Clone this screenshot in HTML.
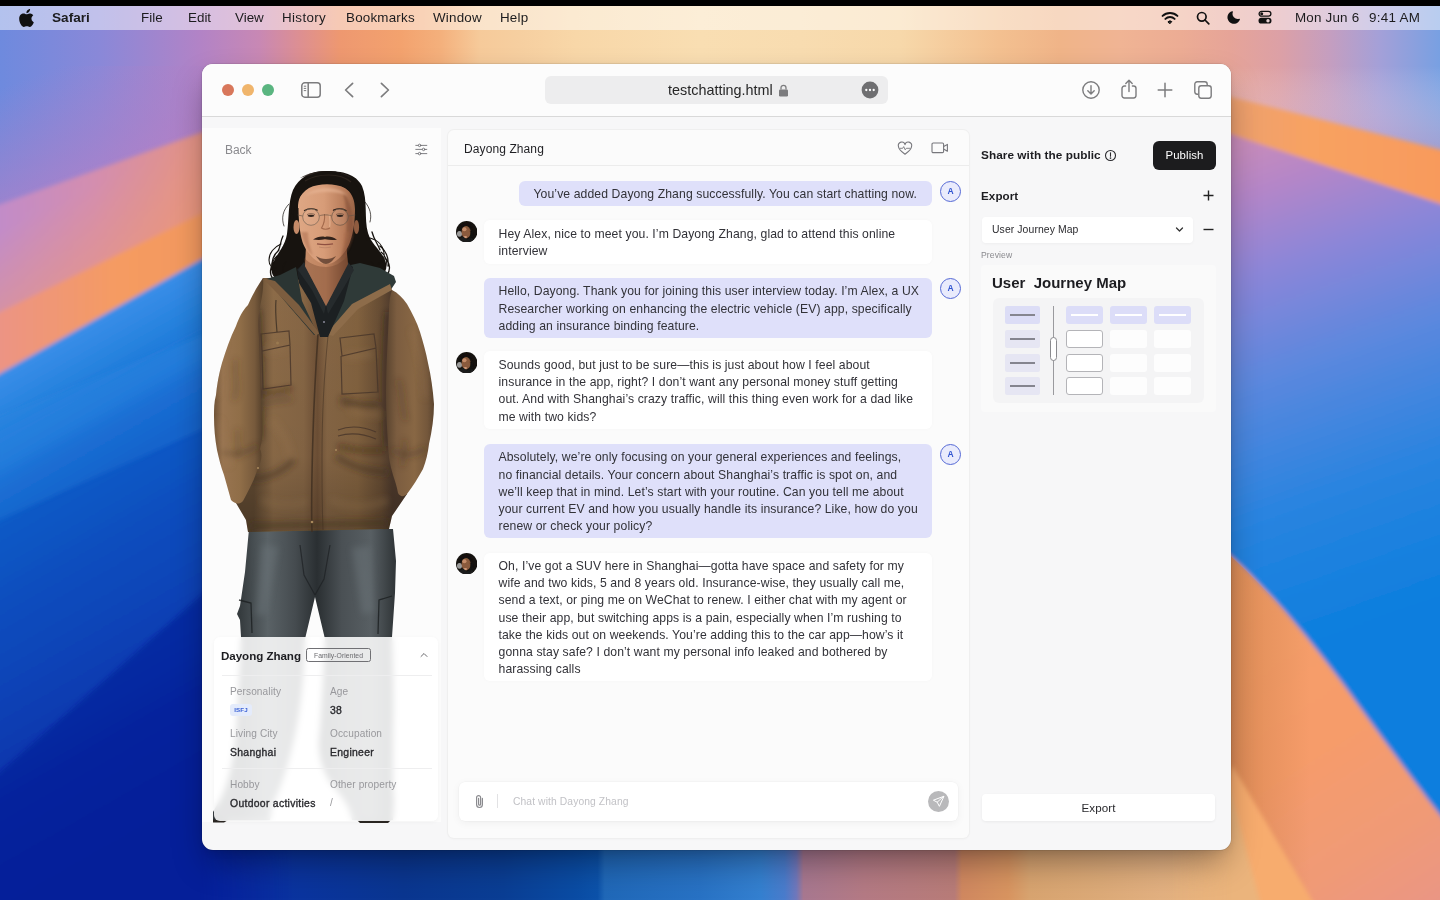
<!DOCTYPE html>
<html lang="en">
<head>
<meta charset="utf-8">
<title>testchatting.html</title>
<style>
*{box-sizing:border-box;margin:0;padding:0}
html,body{width:1440px;height:900px;overflow:hidden;background:#0a2aa0}
body{position:relative;font-family:"Liberation Sans",sans-serif;color:#333}
#wall{position:absolute;left:0;top:0;width:1440px;height:900px}
#notch{position:absolute;left:0;top:0;width:1440px;height:6px;background:#000}
#menubar{will-change:transform;position:absolute;left:0;top:6px;width:1440px;height:24px;background:rgba(255,255,255,.48)}
#menubar span{position:absolute;top:4px;font-size:13.4px;line-height:16px;color:#1c1c1e;white-space:nowrap}
#menubar svg{position:absolute}
#win{position:absolute;left:202px;top:64px;width:1029px;height:786px;border-radius:11px;background:#f7f7f8;overflow:hidden;box-shadow:0 0 0 .5px rgba(0,0,0,.14),0 16px 34px -6px rgba(0,0,10,.40),0 2px 8px rgba(0,0,10,.08)}
#tb{will-change:transform;position:absolute;left:0;top:0;width:1029px;height:53px;background:#fcfcfc;border-bottom:1px solid #d9d9d9}
#tb svg{position:absolute}
.tl{position:absolute;top:20px;width:12px;height:12px;border-radius:50%}
#url{position:absolute;left:343px;top:12px;width:343px;height:28px;border-radius:6px;background:#ededee}
#url span{position:absolute;left:123px;top:6px;font-size:14.4px;line-height:16px;color:#262626;white-space:nowrap}
#g{position:absolute;left:-202px;top:-64px;width:1440px;height:900px;will-change:transform}
#g *{position:absolute}
#g b,#g i,#g span.in{position:static}
.t{white-space:nowrap}
/* chat */
#chat{left:448px;top:130px;width:521px;height:708px;background:#fbfbfb;border-radius:6px;box-shadow:0 0 0 1px #efefef,0 1px 3px rgba(0,0,0,.04)}
#chath{left:0;top:0;width:521px;height:36px;border-bottom:1px solid #ececec}
.bub{border-radius:6px;font-size:12.2px;letter-spacing:.1px;line-height:17.15px;color:#323238;white-space:nowrap;padding:5.4px 0 0 14.5px}
.me{background:#dfe0fa}
.ot{background:#fff;box-shadow:0 0 4px rgba(0,0,0,.025)}
.ava{width:21px;height:21px;border-radius:50%;border:1px solid #5468d4;background:#e9ebfc;color:#2f54d0;font-size:8.5px;font-weight:700;line-height:19px;text-align:center}
.lab{font-size:10.1px;line-height:13px;color:#98989c;letter-spacing:.1px}
.val{font-size:10.4px;line-height:14px;color:#2a2a2e;font-weight:400;-webkit-text-stroke:.35px #2a2a2e;letter-spacing:.3px;margin-top:.6px}
</style>
</head>
<body>
<svg id="wall" width="1440" height="900" viewBox="0 0 1440 900">
<defs>
<linearGradient id="gTop" x1="0" y1="0" x2="1440" y2="0" gradientUnits="userSpaceOnUse">
<stop offset="0" stop-color="#6e8ade"/><stop offset=".07" stop-color="#8a88d8"/><stop offset=".139" stop-color="#b283c6"/><stop offset=".18" stop-color="#c888b4"/><stop offset=".208" stop-color="#dd8f92"/><stop offset=".236" stop-color="#ee9870"/><stop offset=".278" stop-color="#f3a26e"/><stop offset=".306" stop-color="#f4b07c"/><stop offset=".333" stop-color="#f6ca9a"/><stop offset=".361" stop-color="#f6cfa0"/><stop offset=".4" stop-color="#f8d7a8"/><stop offset=".486" stop-color="#f9deb2"/><stop offset=".556" stop-color="#f8dcb0"/><stop offset=".625" stop-color="#f7d8aa"/><stop offset=".694" stop-color="#f3c090"/><stop offset=".736" stop-color="#f0b488"/><stop offset=".778" stop-color="#f0b494"/><stop offset=".82" stop-color="#ecac94"/><stop offset=".854" stop-color="#e6a498"/><stop offset=".889" stop-color="#dca0a6"/><stop offset=".924" stop-color="#c49ec0"/><stop offset=".958" stop-color="#a4a0d8"/><stop offset="1" stop-color="#78a0e2"/>
</linearGradient>
<linearGradient id="gBot" x1="0" y1="0" x2="1440" y2="0" gradientUnits="userSpaceOnUse">
<stop offset="0" stop-color="#08179a"/><stop offset=".07" stop-color="#0a22a2"/><stop offset=".14" stop-color="#0a2ea6"/><stop offset=".21" stop-color="#0a349e"/><stop offset=".28" stop-color="#0a3690"/><stop offset=".35" stop-color="#0a3e94"/><stop offset=".4" stop-color="#0a4ca4"/><stop offset=".415" stop-color="#0c52aa"/><stop offset=".42" stop-color="#2068b8"/><stop offset=".486" stop-color="#2872c4"/><stop offset=".528" stop-color="#3480d0"/><stop offset=".545" stop-color="#4a7ccc"/><stop offset=".553" stop-color="#7078bc"/><stop offset=".558" stop-color="#a87890"/><stop offset=".6" stop-color="#b47a84"/><stop offset=".663" stop-color="#b87c78"/><stop offset=".668" stop-color="#d08860"/><stop offset=".7" stop-color="#d89460"/><stop offset=".715" stop-color="#d8a470"/><stop offset=".764" stop-color="#dcaa78"/><stop offset=".806" stop-color="#e2b080"/><stop offset=".86" stop-color="#eab47c"/><stop offset="1" stop-color="#eab47c"/>
</linearGradient>
<linearGradient id="gRdk" x1="1225" y1="0" x2="1310" y2="0" gradientUnits="userSpaceOnUse"><stop offset="0" stop-color="#d2844e" stop-opacity=".75"/><stop offset="1" stop-color="#d2844e" stop-opacity="0"/></linearGradient>
<linearGradient id="gPink" x1="0" y1="0" x2="215" y2="0" gradientUnits="userSpaceOnUse">
<stop offset="0" stop-color="#c28cc8"/><stop offset=".45" stop-color="#d48eae"/><stop offset="1" stop-color="#e6947e"/>
</linearGradient>
<linearGradient id="gPinkV" x1="0" y1="230" x2="48" y2="330" gradientUnits="userSpaceOnUse">
<stop offset="0" stop-color="#f09a70" stop-opacity="0"/><stop offset="1" stop-color="#f09a70" stop-opacity=".6"/>
</linearGradient>
<linearGradient id="gOr" x1="0" y1="0" x2="215" y2="0" gradientUnits="userSpaceOnUse">
<stop offset="0" stop-color="#ec9484"/><stop offset=".55" stop-color="#f59b62"/><stop offset="1" stop-color="#f2985e"/>
</linearGradient>
<linearGradient id="gBlueL" x1="0" y1="374" x2="232" y2="782" gradientUnits="userSpaceOnUse">
<stop offset="0" stop-color="#3a8ee8"/><stop offset=".09" stop-color="#2682de"/><stop offset=".185" stop-color="#166cd2"/><stop offset=".28" stop-color="#0e5ac6"/><stop offset=".425" stop-color="#0b4ebe"/><stop offset=".6" stop-color="#0a42b6"/><stop offset=".72" stop-color="#0a38ae"/><stop offset=".8" stop-color="#082aa4"/><stop offset="1" stop-color="#08209c"/>
</linearGradient>
<linearGradient id="gTLv" x1="60" y1="66" x2="110" y2="200" gradientUnits="userSpaceOnUse">
<stop offset="0" stop-color="#ac80c8" stop-opacity="0"/><stop offset=".55" stop-color="#ac80c8" stop-opacity=".5"/><stop offset="1" stop-color="#b480c6" stop-opacity=".85"/>
</linearGradient>
<linearGradient id="gRtop" x1="0" y1="66" x2="0" y2="150" gradientUnits="userSpaceOnUse">
<stop offset="0" stop-color="#fff" stop-opacity="0"/><stop offset="1" stop-color="#c89cc0" stop-opacity=".5"/>
</linearGradient>
<linearGradient id="gROr" x1="1225" y1="0" x2="1440" y2="0" gradientUnits="userSpaceOnUse">
<stop offset="0" stop-color="#eca070"/><stop offset=".4" stop-color="#f8a262"/><stop offset="1" stop-color="#f89a5c"/>
</linearGradient>
<linearGradient id="gRmid" x1="1250" y1="140" x2="1420" y2="620" gradientUnits="userSpaceOnUse">
<stop offset="0" stop-color="#c88cba"/><stop offset=".1" stop-color="#b486c8"/><stop offset=".25" stop-color="#8c86d8"/><stop offset=".45" stop-color="#5c88de"/><stop offset=".7" stop-color="#2a84e0"/><stop offset="1" stop-color="#0a7ede"/>
</linearGradient>
<linearGradient id="gRlow" x1="1225" y1="560" x2="1440" y2="900" gradientUnits="userSpaceOnUse">
<stop offset="0" stop-color="#f4a06a"/><stop offset=".5" stop-color="#f69c6a"/><stop offset=".8" stop-color="#f09a76"/><stop offset="1" stop-color="#ea9684"/>
</linearGradient>
<filter id="b2" x="-5%" y="-5%" width="110%" height="110%"><feGaussianBlur stdDeviation="2"/></filter>
<filter id="b6" x="-10%" y="-10%" width="120%" height="120%"><feGaussianBlur stdDeviation="6"/></filter>
<filter id="b14" x="-20%" y="-20%" width="140%" height="140%"><feGaussianBlur stdDeviation="14"/></filter>
<linearGradient id="gmB" x1="150" y1="0" x2="1250" y2="0" gradientUnits="userSpaceOnUse"><stop offset="0" stop-color="#fff" stop-opacity="0"/><stop offset=".045" stop-color="#fff" stop-opacity="0"/><stop offset=".13" stop-color="#fff" stop-opacity="1"/><stop offset=".93" stop-color="#fff" stop-opacity="1"/><stop offset=".985" stop-color="#fff" stop-opacity="0"/><stop offset="1" stop-color="#fff" stop-opacity="0"/></linearGradient>
<mask id="mB" maskUnits="userSpaceOnUse" x="150" y="840" width="1100" height="60"><rect x="150" y="840" width="1100" height="60" fill="url(#gmB)"/></mask>
<clipPath id="cRlow"><path d="M1215,542 C1270,590 1310,640 1340,680 C1380,735 1420,790 1450,828 L1450,910 L1215,910 Z"/></clipPath>
<clipPath id="cL"><rect x="0" y="0" width="216" height="900"/></clipPath>
<clipPath id="cR"><rect x="1222" y="0" width="218" height="900"/></clipPath>
</defs>
<rect width="1440" height="900" fill="#1a62c4"/>
<rect x="0" y="0" width="1440" height="72" fill="url(#gTop)"/>
<g>
<rect x="0" y="0" width="216" height="260" fill="url(#gTop)"/>
<rect x="0" y="66" width="216" height="194" fill="url(#gTLv)"/>
<g filter="url(#b2)">
<polygon points="-10,208 225,124 225,215 -10,320" fill="url(#gPink)"/>
<polygon points="-10,208 225,124 225,215 -10,320" fill="url(#gPinkV)"/>
<polygon points="-10,317 225,202 225,250 -10,380" fill="url(#gOr)"/>
<polygon points="-10,379 225,246 300,246 300,910 -10,910" fill="url(#gBlueL)"/>
</g>
<g filter="url(#b6)">
<polygon points="-10,440 225,320 225,350 -10,480" fill="#2a86e0" opacity=".35"/>
</g>
<g filter="url(#b2)"><polygon points="-20,790 230,570 320,570 320,920 -20,920" fill="#081c98" opacity=".6"/><polygon points="-10,420 -10,524 215,424 215,330" fill="#2a88e2" opacity=".25"/></g>
</g>
<g>
<rect x="1222" y="0" width="218" height="230" fill="url(#gTop)"/>
<rect x="1222" y="66" width="218" height="150" fill="url(#gRtop)"/>
<g filter="url(#b2)">
<polygon points="1215,125 1450,200 1450,910 1215,910" fill="url(#gRmid)"/>
<polygon points="1215,93 1450,152 1450,207 1215,129" fill="url(#gROr)"/>
<path d="M1215,542 C1270,590 1310,640 1340,680 C1380,735 1420,790 1450,828 L1450,910 L1215,910 Z" fill="url(#gRlow)"/>
</g>
<rect x="1215" y="540" width="100" height="370" fill="url(#gRdk)" clip-path="url(#cRlow)"/>
<g filter="url(#b2)"><polygon points="1232,765 1315,905 1255,905 1226,790" fill="#f7ac6e"/><polygon points="1100,786 1229,786 1261,905 1100,905" fill="#ebb47c"/></g>
</g>
<rect x="150" y="840" width="1100" height="60" fill="url(#gBot)" mask="url(#mB)"/>
</svg>

<div id="notch"></div>
<div id="menubar">
<svg style="left:19px;top:3px" width="15" height="18" viewBox="0 0 814 1000"><path fill="#111" d="M788 341c-6 5-108 62-108 190 0 148 130 200 134 201-1 3-21 72-69 142-43 62-88 124-156 124s-86-40-164-40c-77 0-104 41-166 41s-106-57-156-127C45 790 0 663 0 543c0-193 126-296 249-296 66 0 120 43 161 43 39 0 100-46 175-46 28 0 130 3 197 99zM554 159c31-37 53-88 53-139 0-7-1-14-2-20-50 2-110 34-146 76-28 32-55 83-55 135 0 8 1 16 2 18 3 1 8 2 13 2 45 0 102-30 135-72z"/></svg>
<span style="left:52px;font-weight:700;font-size:13.6px">Safari</span>
<span style="left:141px">File</span>
<span style="left:188px">Edit</span>
<span style="left:235px">View</span>
<span style="left:282px;letter-spacing:.35px">History</span>
<span style="left:346px;letter-spacing:.2px">Bookmarks</span>
<span style="left:433px;letter-spacing:.2px">Window</span>
<span style="left:500px;letter-spacing:.2px">Help</span>
<svg style="left:1161px;top:5px" width="18" height="14" viewBox="0 0 18 14" fill="none" stroke="#111" stroke-linecap="round"><path d="M1.6 4.9a10.6 10.6 0 0 1 14.8 0" stroke-width="2"/><path d="M4.4 7.9a6.6 6.6 0 0 1 9.2 0" stroke-width="2"/><path d="M7.2 10.6a2.6 2.6 0 0 1 3.6 0L9 12.6z" fill="#111" stroke-width="1"/></svg>
<svg style="left:1196px;top:5px" width="14" height="14" viewBox="0 0 14 14" fill="none" stroke="#111" stroke-width="1.7" stroke-linecap="round"><circle cx="5.8" cy="5.8" r="4.3"/><path d="M9 9l3.8 3.8"/></svg>
<svg style="left:1226px;top:4px" width="15" height="15" viewBox="0 0 15 15"><path fill="#111" d="M6.2 1.2a6.4 6.4 0 1 0 7.7 8.3c.2-.5-.3-.9-.8-.7A5.2 5.2 0 0 1 6.9 1.9c.2-.5-.2-.9-.7-.7z"/></svg>
<svg style="left:1258px;top:4px" width="14" height="14" viewBox="0 0 14 14"><rect x="1.1" y="1.4" width="11.8" height="4.8" rx="2.4" fill="none" stroke="#111" stroke-width="1.3"/><circle cx="3.7" cy="3.8" r="1.5" fill="#111"/><rect x=".5" y="7.8" width="13" height="5.8" rx="2.9" fill="#111"/><circle cx="10" cy="10.7" r="1.7" fill="#e6cfd0"/></svg>
<span style="left:1295px;letter-spacing:.2px">Mon Jun 6</span>
<span style="left:1369px;letter-spacing:.3px">9:41 AM</span>
</div>
<div id="win">
<div id="tb">
<div class="tl" style="left:20px;background:#d8775b"></div>
<div class="tl" style="left:40px;background:#f0b56c"></div>
<div class="tl" style="left:60px;background:#5ab580"></div>
<svg style="left:98px;top:17px" width="22" height="18" viewBox="0 0 22 18" fill="none" stroke="#7c7c7e" stroke-width="1.5"><rect x="1.8" y="1.8" width="18.4" height="14.4" rx="3"/><path d="M8.2 1.8v14.4"/><path d="M3.8 5.2h2.4M3.8 7.4h2.4M3.8 9.6h2.4" stroke-width="1"/></svg>
<svg style="left:141px;top:18px" width="12" height="16" viewBox="0 0 12 16" fill="none" stroke="#7c7c7e" stroke-width="1.7" stroke-linecap="round" stroke-linejoin="round"><path d="M9.6 1.4L2.6 8l7 6.6"/></svg>
<svg style="left:177px;top:18px" width="12" height="16" viewBox="0 0 12 16" fill="none" stroke="#7c7c7e" stroke-width="1.7" stroke-linecap="round" stroke-linejoin="round"><path d="M2.4 1.4L9.4 8l-7 6.6"/></svg>
<div id="url"><span>testchatting.html</span>
<svg style="left:233px;top:8px" width="11" height="13" viewBox="0 0 11 13"><rect x="1" y="5.4" width="9" height="7" rx="1.2" fill="#7c7c7e"/><path d="M3 5.6V3.8a2.5 2.5 0 0 1 5 0v1.8" fill="none" stroke="#7c7c7e" stroke-width="1.3"/></svg>
<svg style="left:316px;top:5px" width="18" height="18" viewBox="0 0 18 18"><circle cx="9" cy="9" r="8.4" fill="#6f6f71"/><circle cx="5.3" cy="9" r="1.15" fill="#fff"/><circle cx="9" cy="9" r="1.15" fill="#fff"/><circle cx="12.7" cy="9" r="1.15" fill="#fff"/></svg>
</div>
<svg style="left:879px;top:16px" width="20" height="20" viewBox="0 0 20 20" fill="none" stroke="#7c7c7e" stroke-width="1.4" stroke-linecap="round" stroke-linejoin="round"><circle cx="10" cy="10" r="8.2"/><path d="M10 5.6v8.2M6.8 10.8L10 14l3.2-3.2"/></svg>
<svg style="left:918px;top:14px" width="18" height="22" viewBox="0 0 18 22" fill="none" stroke="#7c7c7e" stroke-width="1.4" stroke-linecap="round" stroke-linejoin="round"><path d="M5.6 8H4.4A2.4 2.4 0 0 0 2 10.4v7.2A2.4 2.4 0 0 0 4.4 20h9.2a2.4 2.4 0 0 0 2.4-2.4v-7.2A2.4 2.4 0 0 0 13.6 8h-1.2"/><path d="M9 13.5V2.4M5.8 5.4L9 2.2l3.2 3.2"/></svg>
<svg style="left:955px;top:18px" width="16" height="16" viewBox="0 0 16 16" fill="none" stroke="#7c7c7e" stroke-width="1.5" stroke-linecap="round"><path d="M8 1.2v13.6M1.2 8h13.6"/></svg>
<svg style="left:991px;top:16px" width="20" height="20" viewBox="0 0 20 20" fill="none" stroke="#7c7c7e" stroke-width="1.4" stroke-linejoin="round"><path d="M5.3 14.2H4.2A2.4 2.4 0 0 1 1.8 11.8V4.2A2.4 2.4 0 0 1 4.2 1.8h7.6a2.4 2.4 0 0 1 2.4 2.4v1.1"/><rect x="5.8" y="5.8" width="12.4" height="12.4" rx="2.4"/></svg>
</div>
<div id="g">
<div style="left:202px;top:128px;width:238.5px;height:694px;background:#fcfcfc"></div>
<div class="t" style="left:225px;top:142px;font-size:12px;line-height:16px;color:#8a8a8e;letter-spacing:-.1px">Back</div>
<svg style="left:414px;top:143px" width="14" height="13" viewBox="0 0 14 13" fill="none" stroke="#707075" stroke-width=".9" stroke-linecap="round"><path d="M1.8 2.4h2.4M7 2.4h5.8M1.8 6.4h6.4M11 6.4h1.8M1.8 10.6h2.4M7 10.6h5.8"/><circle cx="5.6" cy="2.4" r="1.25"/><circle cx="9.6" cy="6.4" r="1.25"/><circle cx="5.6" cy="10.6" r="1.25"/></svg>
<svg style="left:205px;top:165px" width="240" height="662" viewBox="205 165 240 662">
<defs>
<linearGradient id="pSkin" x1="296" y1="0" x2="358" y2="0" gradientUnits="userSpaceOnUse"><stop offset="0" stop-color="#dfa885"/><stop offset=".45" stop-color="#d79c78"/><stop offset=".8" stop-color="#b67a58"/><stop offset="1" stop-color="#8f5c40"/></linearGradient>
<linearGradient id="pNeck" x1="304" y1="0" x2="348" y2="0" gradientUnits="userSpaceOnUse"><stop offset="0" stop-color="#c88e6a"/><stop offset=".5" stop-color="#c08460"/><stop offset="1" stop-color="#7a4c34"/></linearGradient>
<linearGradient id="pJk" x1="214" y1="0" x2="434" y2="0" gradientUnits="userSpaceOnUse"><stop offset="0" stop-color="#6e5238"/><stop offset=".1" stop-color="#8c6b48"/><stop offset=".22" stop-color="#7a5c3e"/><stop offset=".34" stop-color="#86664a"/><stop offset=".5" stop-color="#73563a"/><stop offset=".62" stop-color="#7e5f42"/><stop offset=".8" stop-color="#6a4f36"/><stop offset=".92" stop-color="#7a5b3e"/><stop offset="1" stop-color="#5a432e"/></linearGradient>
<linearGradient id="pJkV" x1="0" y1="280" x2="0" y2="532" gradientUnits="userSpaceOnUse"><stop offset="0" stop-color="#000" stop-opacity="0"/><stop offset=".7" stop-color="#000" stop-opacity=".04"/><stop offset="1" stop-color="#000" stop-opacity=".22"/></linearGradient>
<linearGradient id="pJn" x1="240" y1="0" x2="394" y2="0" gradientUnits="userSpaceOnUse"><stop offset="0" stop-color="#353b3e"/><stop offset=".18" stop-color="#5a6266"/><stop offset=".36" stop-color="#454b4f"/><stop offset=".5" stop-color="#2a2f32"/><stop offset=".66" stop-color="#4a5054"/><stop offset=".85" stop-color="#585f63"/><stop offset="1" stop-color="#32373a"/></linearGradient>
<filter id="pb1" filterUnits="userSpaceOnUse" x="205" y="165" width="240" height="662"><feGaussianBlur stdDeviation="1.2"/></filter>
<filter id="pb05" filterUnits="userSpaceOnUse" x="205" y="165" width="240" height="662"><feGaussianBlur stdDeviation=".45"/></filter>
<filter id="pb3" filterUnits="userSpaceOnUse" x="205" y="165" width="240" height="662"><feGaussianBlur stdDeviation="3"/></filter>
</defs>
<!-- hair back -->
<path d="M327 171c-15-1-28 6-34 19-5 12-4 30-6 44-2 12-9 18-13 27-4 8-3 16 4 18 4 1 8 0 12-2l10 8h58l12-12c4 3 9 4 13 1 5-4 4-12 0-18-5-8-12-13-15-23-4-14 0-33-6-47-6-12-20-15-35-15z" fill="#17130f"/>
<g fill="none" stroke="#17130f" stroke-width="1.3" stroke-linecap="round">
<path d="M274 262c-4 5-5 12-1 17M279 250c-6 5-8 12-7 20M283 236c-3 6-2 10-5 15"/>
<path d="M385 258c5 5 6 12 2 17M380 246c6 5 9 12 8 20M372 232c2 8 6 12 8 18M375 268c4 3 6 8 3 12"/>
<path d="M288 278c-3 2-7 3-10 1M370 280c4 2 8 2 11-1"/>
<path d="M281 244c-7 3-12 9-12 16 0 5 3 8 7 8M277 256c-5 4-6 10-3 15M286 262c-4 4-4 9-1 13" stroke-width="1.1"/>
<path d="M370 238c8 2 13 8 14 15 1 6-2 10-6 11M381 252c5 4 7 10 4 16M371 262c4 4 5 9 2 14" stroke-width="1.1"/>
<path d="M289 204c-6 6-8 14-5 22M365 202c5 6 7 13 5 20" stroke-width=".9" opacity=".8"/>
</g>
<path d="M300 178c8-5 18-7 27-7s18 2 25 7c-8-3-16-4-25-4s-18 1-27 4z" fill="#2e2620" opacity=".8"/>
<!-- legs / jeans -->
<path d="M249 529L245 572L240 606L237 614L240 620L241 637C240 670 238 700 236 730C234 760 228 785 220 800L213 812L213 820L270 820L272 806C282 785 290 760 296 730C302 700 304 670 305 639L315 597L325 639C324 670 322 700 320 730C317 750 320 765 330 782C340 795 350 805 352 820L393 820L394 800C392 780 393 760 393 730C394 700 393 670 392 637L395 593L396 561L393 529Z" fill="url(#pJn)"/>
<path d="M300 545l4 30 11 20M330 545l-6 34-9 16" fill="none" stroke="#1d2022" stroke-width="1.2" opacity=".7"/>
<path d="M239 600l12 3 1 30M392 596l-13 4-1 34" fill="none" stroke="#1c1f21" stroke-width="1.3" opacity=".8"/>
<g filter="url(#pb3)" opacity=".5"><path d="M262 545l-6 70 10 0 12-68zM352 548l10 66 12-2-4-66z" fill="#6a7378"/></g>
<!-- boots -->
<path d="M213 819.5h16l-5 3h-11zM357 820h34l-3 3h-28z" fill="#2a2622"/>
<!-- jacket -->
<defs>
<clipPath id="cTo"><path d="M263 278c10 0 26 0 38 2l25 54 30-50c14 0 26 2 36 6l8 70-6 80 13 54-15 22-3 13-141 3-2-12-10-17 16-35-2-70 2-60c0-20 4-40 11-60z"/></clipPath><clipPath id="cAr"><path d="M263 278c-7 10-12 20-15 27-6 6-9 13-12 21-6 12-10 24-14 37-3 11-5 21-6 32-2 7-2 14-2 21 0 12 1 23 3 34 2 9 4 17 7 25l7 25c4 4 8 5 12 1 4-8 10-18 14-30 4-8 6-16 3-22 4-14 2-32 1-48l-2-62c-1-12-1-22 1-32 2-10 4-20 3-29z"/><path d="M392 290c6 3 11 8 15 14 5 9 10 18 13 28 3 10 6 20 8 31 3 13 5 27 6 41 0 13-2 27-5 40-1 9-3 17-6 25-5 9-10 17-16 25-3 3-7 3-9-1-1-6-3-12-5-18-3-10-5-20-5-31-1-16-2-33-2-50 0-28 2-56 3-84 0-8 1-14 3-20z"/></clipPath>
<linearGradient id="pLA" x1="213" y1="0" x2="262" y2="0" gradientUnits="userSpaceOnUse"><stop offset="0" stop-color="#6c5035"/><stop offset=".2" stop-color="#987450"/><stop offset=".55" stop-color="#906e48"/><stop offset=".85" stop-color="#775a3c"/><stop offset="1" stop-color="#58422c"/></linearGradient>
<linearGradient id="pTo" x1="254" y1="0" x2="392" y2="0" gradientUnits="userSpaceOnUse"><stop offset="0" stop-color="#614a32"/><stop offset=".14" stop-color="#8c6b48"/><stop offset=".36" stop-color="#866645"/><stop offset=".46" stop-color="#6e5036"/><stop offset=".53" stop-color="#866645"/><stop offset=".75" stop-color="#82623f"/><stop offset=".92" stop-color="#664c33"/><stop offset="1" stop-color="#4e3a2c"/></linearGradient>
<linearGradient id="pRA" x1="384" y1="0" x2="435" y2="0" gradientUnits="userSpaceOnUse"><stop offset="0" stop-color="#54402c"/><stop offset=".25" stop-color="#7c5d40"/><stop offset=".6" stop-color="#886744"/><stop offset=".85" stop-color="#74573b"/><stop offset="1" stop-color="#58422d"/></linearGradient>
</defs>
<path d="M263 278c10 0 26 0 38 2l25 54 30-50c14 0 26 2 36 6l8 70-6 80 13 54-15 22-3 13-141 3-2-12-10-17 16-35-2-70 2-60c0-20 4-40 11-60z" fill="url(#pTo)"/>
<path d="M263 278c10 0 26 0 38 2l25 54 30-50c14 0 26 2 36 6l8 70-6 80 13 54-15 22-3 13-141 3-2-12-10-17 16-35-2-70 2-60c0-20 4-40 11-60z" fill="url(#pJkV)"/>
<!-- torso folds -->
<g clip-path="url(#cTo)"><g filter="url(#pb3)">
<path d="M340 398c12 6 26 8 40 6M338 446c14 4 30 6 46 4M262 392c10 2 20 0 30-4" fill="none" stroke="#2e2218" stroke-width="4" opacity=".55"/>
<path d="M257 310c3 40 3 90 2 130M388 312c-3 40-4 90-1 134" fill="none" stroke="#2e2218" stroke-width="6" opacity=".5"/>
<path d="M272 420c8 10 16 20 18 36M350 410c10 4 20 6 30 4" fill="none" stroke="#9a7850" stroke-width="6" opacity=".3"/>
<path d="M262 404c10-3 20-4 30-5M340 404c12 1 26 2 38 2" fill="none" stroke="#4a3726" stroke-width="3" opacity=".55"/>
<path d="M250 478c14 2 30-4 44-18M336 456c14 10 32 16 52 16" fill="none" stroke="#3e2e20" stroke-width="5" opacity=".6"/>
<path d="M262 500c12 6 30 6 46 2M330 500c18 8 40 8 58 0" fill="none" stroke="#8a6a48" stroke-width="7" opacity=".35"/>
<path d="M250 526l138-3" fill="none" stroke="#3e2e20" stroke-width="5" opacity=".65"/>
<path d="M268 350l18-2M346 356l26-2" fill="none" stroke="#93724e" stroke-width="8" opacity=".35"/>
</g></g>
<!-- arms -->
<path d="M263 278c-7 10-12 20-15 27-6 6-9 13-12 21-6 12-10 24-14 37-3 11-5 21-6 32-2 7-2 14-2 21 0 12 1 23 3 34 2 9 4 17 7 25l7 25c4 4 8 5 12 1 4-8 10-18 14-30 4-8 6-16 3-22 4-14 2-32 1-48l-2-62c-1-12-1-22 1-32 2-10 4-20 3-29z" fill="url(#pLA)"/>
<path d="M392 290c6 3 11 8 15 14 5 9 10 18 13 28 3 10 6 20 8 31 3 13 5 27 6 41 0 13-2 27-5 40-1 9-3 17-6 25-5 9-10 17-16 25-3 3-7 3-9-1-1-6-3-12-5-18-3-10-5-20-5-31-1-16-2-33-2-50 0-28 2-56 3-84 0-8 1-14 3-20z" fill="url(#pRA)"/>
<g clip-path="url(#cAr)"><g filter="url(#pb3)">
<path d="M224 340c-5 18-8 36-8 56M219 420c1 16 5 32 10 46" fill="none" stroke="#a07c56" stroke-width="4" opacity=".45"/>
<path d="M236 360c-3 14 4 26-2 40M238 430c-2 10 2 18 0 28" fill="none" stroke="#4e3a28" stroke-width="3" opacity=".45"/>
<path d="M412 330c8 20 12 44 13 68" fill="none" stroke="#95734f" stroke-width="4" opacity=".4"/>
<path d="M398 380c6 12 2 26 8 40M404 440c2 10 0 18-2 26" fill="none" stroke="#3e2e20" stroke-width="3" opacity=".45"/>
<path d="M222 452c10 4 22 2 36-6M392 450c10 6 22 6 34-2" fill="none" stroke="#3e2e20" stroke-width="4" opacity=".4"/>
</g></g>
<!-- placket / zipper -->
<path d="M318 334c-2 30-4 66-5 100-1 34-2 66-1 98" fill="none" stroke="#3e2e20" stroke-width="1.6" opacity=".8"/>
<path d="M328 336c-4 40-6 80-6 120 0 26 0 50 1 74" fill="none" stroke="#3e2e20" stroke-width="1" opacity=".5"/>
<circle cx="312" cy="522" r="1.3" fill="#a8885c"/><circle cx="258" cy="468" r="1" fill="#a8885c"/><circle cx="336" cy="450" r="1" fill="#a8885c"/>
<!-- pockets -->
<g fill="none" stroke="#47352a" stroke-width="1.2" opacity=".8">
<path d="M261 334l28-3 1 14-28 6zM262 351l1 38 28-4-1-40"/>
<path d="M340 338l34-4 2 14-34 8zM341 356l1 38 36-2-2-44"/>
<path d="M338 430c10-4 24-4 38 2M338 436c10-3 24-3 38 3"/>
</g>
<path d="M276 300c-1 10 0 20 1 32" fill="none" stroke="#4a3a2a" stroke-width="1.2"/><circle cx="277.5" cy="343" r="1.5" fill="#9a7a50"/>
<!-- hood + collar -->
<path d="M266 279l14-4 16-8 6 34 16 34-4 0-26-30z" fill="#2b3533"/>
<path d="M346 266l14-3 20 5 14 8 2 6-6 9-34 18-22 23-8-6 12-30z" fill="#2f3a38"/>
<path d="M392 290l-34 19-25 27-7-2 26-30 38-20z" fill="#8d6c4a"/>
<path d="M263 278c8 10 20 20 30 32l23 26 3-3-20-28-24-24z" fill="#7c5d3f"/>
<!-- polo -->
<path d="M297 269l8-6 8 22 13 20 12-20 8-24 7 6-9 34-16 36-8 0-9-34-12-20z" fill="#1c2022"/>
<path d="M304 262l-6 8 14 20 12 24 2-10zM348 262l6 8-14 24-12 20-2-10z" fill="#262b2d"/>
<circle cx="324" cy="322" r="1" fill="#889"/>
<!-- neck -->
<path d="M306 246l-1 20 21 40 22-42-2-22z" fill="url(#pNeck)"/>
<path d="M304 258c6 6 14 9 22 9s16-4 21-11l1 8-22 42-21-40z" fill="#6e432c" opacity=".35"/>
<!-- ears -->
<ellipse cx="296.5" cy="227" rx="3" ry="7" fill="#c48a68"/><ellipse cx="356.5" cy="227" rx="2.6" ry="7" fill="#8f5c40"/>
<!-- face -->
<path d="M298 208c0-17 11-25 28.5-25s28.5 9 28.5 26c0 10-1 22-5 33-3 8-8 14-13 18-4 3-7 4-10.5 4s-7-1-11-4c-5-4-10-10-13-18-3-10-4-24-4-34z" fill="url(#pSkin)"/>
<g filter="url(#pb1)">
<path d="M343 192c7 8 12 22 10 44-2 9-6 17-12 23 6-20 8-42 2-67z" fill="#7a482f" opacity=".5"/>
<path d="M301 232c2 10 6 18 12 24-3-8-5-16-5-24zM349 232c-1 9-4 17-8 24 2-8 3-16 3-24z" fill="#a86a4a" opacity=".5"/>
<path d="M305 196c6-6 14-8 22-8s14 2 20 7c-6-2-12-3-20-3s-16 1-22 4z" fill="#e9b898" opacity=".6"/>
</g>
<g filter="url(#pb05)">
<path d="M313 239.5c4-2.5 8-3.4 12-2.6 4-.8 8 0 12 2.8-4 .6-8 .4-12-.4-4 .8-8 .8-12 .2z" fill="#33211a"/>
<path d="M317 243.8c5 1 11 1 16 0" stroke="#8e5040" stroke-width="1.2" fill="none"/>
<path d="M319 247c4 1 8 1 12 0" stroke="#b07860" stroke-width=".8" fill="none" opacity=".7"/>
<path d="M316 256c3 5 7 8 10 8s7-3 10-8c-3 2-6 3-10 3s-7-1-10-3z" fill="#4a3022" opacity=".7"/>
<path d="M304.5 210.5c4-2.2 9-2.2 12.5-.3M333.5 210.2c4-2 9-1.8 12.5.5" stroke="#33251d" stroke-width="1.4" fill="none" stroke-linecap="round"/>
<ellipse cx="311" cy="215.8" rx="3.3" ry="1.15" fill="#22160f"/><ellipse cx="340" cy="215.8" rx="3.3" ry="1.15" fill="#22160f"/><path d="M307 214.6c2-1.2 6-1.2 8 0M336 214.6c2-1.2 6-1.2 8 0" stroke="#4a3326" stroke-width=".6" fill="none"/>
<path d="M324.5 214c.5 5-.5 10-3 14 2 1.6 6 1.6 8.5 0" stroke="#a3694b" stroke-width="1.1" fill="none"/>
<path d="M329 214c1 5 1.5 9 .5 13" stroke="#e8b694" stroke-width="1.2" fill="none" opacity=".7"/>
</g>
<circle cx="311" cy="217" r="8.3" fill="#fff" fill-opacity=".06" stroke="#7a6656" stroke-width=".7"/><circle cx="340" cy="217" r="8.3" fill="#fff" fill-opacity=".06" stroke="#6a5646" stroke-width=".7"/><path d="M319.3 216c2-1.5 10.4-1.5 12.4 0M302.7 216l-5-1M348.3 216l7-1" fill="none" stroke="#6a5646" stroke-width=".7"/>
<!-- hair front -->
<path d="M292 218c-4-26 11-46 35-47 24 0 39 17 35 47-2-13-6-24-17-30-10-5-26-5-36 0-10 6-14 17-17 30z" fill="#17130f"/>
<path d="M305 181c8-5 16-6 24-6s16 2 22 7" fill="none" stroke="#3a2f27" stroke-width="1.2" opacity=".6"/>
<path d="M292 214c-1 10-2 20-4 28M362 212c1 10 3 20 6 28" stroke="#17130f" stroke-width="3" fill="none"/>
</svg>

<div style="left:214px;top:637px;width:224px;height:184px;border-radius:6px;background:rgba(255,255,255,.87);-webkit-backdrop-filter:blur(3px);backdrop-filter:blur(3px);box-shadow:0 1px 4px rgba(0,0,0,.04)"></div>
<div class="t" style="left:221px;top:648px;font-size:11.6px;font-weight:700;line-height:15px;color:#1d1d21;letter-spacing:-.05px">Dayong Zhang</div>
<div style="left:306px;top:648px;width:65px;height:14px;border:1px solid #707074;border-radius:2.5px"></div>
<div class="t" style="left:306px;top:650.5px;width:65px;text-align:center;font-size:6.8px;line-height:9px;color:#6a6a6e;letter-spacing:.05px">Family-Oriented</div>
<svg style="left:419px;top:651px" width="10" height="8" viewBox="0 0 10 8" fill="none" stroke="#6a6a6e" stroke-width="1" stroke-linecap="round" stroke-linejoin="round"><path d="M2 5.5l3-3 3 3"/></svg>
<div style="left:222px;top:675px;width:210px;height:1px;background:#eeeeef"></div>
<div class="t lab" style="left:230px;top:685px">Personality</div>
<div class="t lab" style="left:330px;top:685px">Age</div>
<div style="left:230px;top:704px;width:22px;height:12px;border-radius:3px;background:#e4ebfb"></div>
<div class="t" style="left:230px;top:706px;width:22px;text-align:center;font-size:6.2px;line-height:8px;color:#3b62d6;font-weight:700;letter-spacing:.1px">ISFJ</div>
<div class="t val" style="left:330px;top:703px">38</div>
<div class="t lab" style="left:230px;top:727px">Living City</div>
<div class="t lab" style="left:330px;top:727px">Occupation</div>
<div class="t val" style="left:230px;top:745px">Shanghai</div>
<div class="t val" style="left:330px;top:745px">Engineer</div>
<div style="left:222px;top:768px;width:210px;height:1px;background:#eeeeef"></div>
<div class="t lab" style="left:230px;top:778px">Hobby</div>
<div class="t lab" style="left:330px;top:778px">Other property</div>
<div class="t val" style="left:230px;top:796px">Outdoor activities</div>
<div class="t lab" style="left:330px;top:796px">/</div>

<div id="chat">
<div id="chath"></div>
<div class="t" style="left:16px;top:10.6px;font-size:12px;line-height:16px;color:#1f1f23;letter-spacing:.1px">Dayong Zhang</div>
<svg style="left:449px;top:11px" width="16" height="15" viewBox="0 0 16 15" fill="none" stroke="#77777c" stroke-width="1.1" stroke-linejoin="round" stroke-linecap="round"><path d="M8 13.2C3.8 10.2 1.4 7.8 1.4 5.2A3.2 3.2 0 0 1 8 3.6a3.2 3.2 0 0 1 6.6 1.6c0 2.6-2.4 5-6.6 8z"/><path d="M3.4 7.3h2.3l1-1.7 1.5 3.2 1.1-1.5h3.3" stroke-width=".9"/></svg>
<svg style="left:483px;top:12px" width="18" height="12" viewBox="0 0 18 12" fill="none" stroke="#77777c" stroke-width="1.1" stroke-linejoin="round"><rect x="1" y="1" width="11.6" height="9.6" rx="1.2"/><path d="M12.6 4.6l3.8-2.2v6.8l-3.8-2.2"/></svg>
</div>
<!-- messages (global coords) -->
<div class="bub me" style="left:519px;top:181px;width:413px;height:25.4px">You’ve added Dayong Zhang successfully. You can start chatting now.</div>
<div class="ava" style="left:940px;top:181px">A</div>

<div class="bub ot" style="left:484px;top:220px;width:448px;height:44px;padding-top:6.1px">Hey Alex, nice to meet you. I’m Dayong Zhang, glad to attend this online<br>interview</div>
<svg style="left:455.5px;top:220.8px" width="21.4" height="21.4" viewBox="0 0 22 22"><defs><clipPath id="av455221"><circle cx="11" cy="11" r="11"/></clipPath><filter id="af455221"><feGaussianBlur stdDeviation=".7"/></filter></defs><g clip-path="url(#av455221)"><rect width="22" height="22" fill="#15120f"/><g filter="url(#af455221)"><ellipse cx="3.6" cy="13.2" rx="2.6" ry="3" fill="#b4b4b4" opacity=".85"/><ellipse cx="10.4" cy="11.5" rx="4.6" ry="6.4" fill="#8a5a3c"/><ellipse cx="8.6" cy="8.5" rx="2.2" ry="2" fill="#c48c6a"/><ellipse cx="9.6" cy="16.5" rx="1.8" ry="1.2" fill="#d09a7a"/><path d="M4 8.5c0-5 3-7 7-7s6.5 3 6 8c-1-3-3.5-5-6.5-5S5 6 4 8.5z" fill="#120f0d"/><path d="M3 22c0-3 2-5.5 5-5.5l3.5 3 2.5-2c3 0 5 2 6 4.5z" fill="#1a1d1c"/><path d="M14 10c1.5 3 1.5 7-1 10 3-1 5-4 5-8z" fill="#15120f" opacity=".7"/></g></g></svg>

<div class="bub me" style="left:484px;top:278px;width:448px;height:59.6px">Hello, Dayong. Thank you for joining this user interview today. I’m Alex, a UX<br>Researcher working on enhancing the electric vehicle (EV) app, specifically<br>adding an insurance binding feature.</div>
<div class="ava" style="left:940px;top:278px">A</div>

<div class="bub ot" style="left:484px;top:351px;width:448px;height:78px;padding-top:6.1px">Sounds good, but just to be sure—this is just about how I feel about<br>insurance in the app, right? I don’t want any personal money stuff getting<br>out. And with Shanghai’s crazy traffic, will this thing even work for a dad like<br>me with two kids?</div>
<svg style="left:455.5px;top:351.8px" width="21.4" height="21.4" viewBox="0 0 22 22"><defs><clipPath id="av455352"><circle cx="11" cy="11" r="11"/></clipPath><filter id="af455352"><feGaussianBlur stdDeviation=".7"/></filter></defs><g clip-path="url(#av455352)"><rect width="22" height="22" fill="#15120f"/><g filter="url(#af455352)"><ellipse cx="3.6" cy="13.2" rx="2.6" ry="3" fill="#b4b4b4" opacity=".85"/><ellipse cx="10.4" cy="11.5" rx="4.6" ry="6.4" fill="#8a5a3c"/><ellipse cx="8.6" cy="8.5" rx="2.2" ry="2" fill="#c48c6a"/><ellipse cx="9.6" cy="16.5" rx="1.8" ry="1.2" fill="#d09a7a"/><path d="M4 8.5c0-5 3-7 7-7s6.5 3 6 8c-1-3-3.5-5-6.5-5S5 6 4 8.5z" fill="#120f0d"/><path d="M3 22c0-3 2-5.5 5-5.5l3.5 3 2.5-2c3 0 5 2 6 4.5z" fill="#1a1d1c"/><path d="M14 10c1.5 3 1.5 7-1 10 3-1 5-4 5-8z" fill="#15120f" opacity=".7"/></g></g></svg>

<div class="bub me" style="left:484px;top:444px;width:448px;height:94px">Absolutely, we’re only focusing on your general experiences and feelings,<br>no financial details. Your concern about Shanghai’s traffic is spot on, and<br>we’ll keep that in mind. Let’s start with your routine. Can you tell me about<br>your current EV and how you usually handle its insurance? Like, how do you<br>renew or check your policy?</div>
<div class="ava" style="left:940px;top:444px">A</div>

<div class="bub ot" style="left:484px;top:553px;width:448px;height:128px;padding-top:5.1px">Oh, I’ve got a SUV here in Shanghai—gotta have space and safety for my<br>wife and two kids, 5 and 8 years old. Insurance-wise, they usually call me,<br>send a text, or ping me on WeChat to renew. I either chat with my agent or<br>use their app, but switching apps is a pain, especially when I’m rushing to<br>take the kids out on weekends. You’re adding this to the car app—how’s it<br>gonna stay safe? I don’t want my personal info leaked and bothered by<br>harassing calls</div>
<svg style="left:455.5px;top:552.8px" width="21.4" height="21.4" viewBox="0 0 22 22"><defs><clipPath id="av455553"><circle cx="11" cy="11" r="11"/></clipPath><filter id="af455553"><feGaussianBlur stdDeviation=".7"/></filter></defs><g clip-path="url(#av455553)"><rect width="22" height="22" fill="#15120f"/><g filter="url(#af455553)"><ellipse cx="3.6" cy="13.2" rx="2.6" ry="3" fill="#b4b4b4" opacity=".85"/><ellipse cx="10.4" cy="11.5" rx="4.6" ry="6.4" fill="#8a5a3c"/><ellipse cx="8.6" cy="8.5" rx="2.2" ry="2" fill="#c48c6a"/><ellipse cx="9.6" cy="16.5" rx="1.8" ry="1.2" fill="#d09a7a"/><path d="M4 8.5c0-5 3-7 7-7s6.5 3 6 8c-1-3-3.5-5-6.5-5S5 6 4 8.5z" fill="#120f0d"/><path d="M3 22c0-3 2-5.5 5-5.5l3.5 3 2.5-2c3 0 5 2 6 4.5z" fill="#1a1d1c"/><path d="M14 10c1.5 3 1.5 7-1 10 3-1 5-4 5-8z" fill="#15120f" opacity=".7"/></g></g></svg>

<!-- input -->
<div style="left:459px;top:782px;width:499px;height:39px;border-radius:6px;background:#fff;box-shadow:0 2px 8px rgba(0,0,0,.05),0 0 0 .5px rgba(0,0,0,.03)"></div>
<svg style="left:474px;top:794px" width="11" height="15" viewBox="0 0 11 15" fill="none" stroke="#8a8a8e" stroke-width="1.2" stroke-linecap="round"><path d="M8.4 4.4v6.2a2.9 2.9 0 0 1-5.8 0V3.6a2 2 0 0 1 4 0v6.6a1 1 0 0 1-2 0V4.4"/></svg>
<div style="left:497px;top:794px;width:1px;height:14px;background:#e2e2e4"></div>
<div class="t" style="left:513px;top:795px;font-size:10.3px;line-height:13px;color:#c2c2c6;letter-spacing:.1px">Chat with Dayong Zhang</div>
<div style="left:928px;top:791px;width:21px;height:21px;border-radius:50%;background:#b9b9bb"></div>
<svg style="left:932px;top:795px" width="13" height="13" viewBox="0 0 13 13" fill="none" stroke="#fff" stroke-width="1" stroke-linejoin="round" stroke-linecap="round"><path d="M11.6 1.4L1.4 5.2l3.8 2 2 3.8z"/><path d="M11.6 1.4L5.2 7.2"/></svg>

<div class="t" style="left:981px;top:148px;font-size:11.8px;font-weight:700;line-height:15px;color:#1d1d21;letter-spacing:.05px">Share with the public</div>
<svg style="left:1104px;top:149px" width="13" height="13" viewBox="0 0 13 13" fill="none" stroke="#2a2a2e" stroke-width="1.1" stroke-linecap="round"><circle cx="6.5" cy="6.5" r="5"/><path d="M6.5 3.8v3.4"/><circle cx="6.5" cy="9.1" r=".3" fill="#2a2a2e"/></svg>
<div style="left:1153px;top:141px;width:63px;height:28.5px;border-radius:6px;background:#1c1c1e"></div>
<div class="t" style="left:1153px;top:148px;width:63px;text-align:center;font-size:11.4px;line-height:15px;color:#fff;letter-spacing:.1px">Publish</div>
<div class="t" style="left:981px;top:188px;font-size:11.6px;font-weight:700;line-height:15px;color:#1d1d21;letter-spacing:.1px">Export</div>
<svg style="left:1202px;top:189px" width="13" height="13" viewBox="0 0 13 13" fill="none" stroke="#222" stroke-width="1.4"><path d="M6.5 1.5v10M1.5 6.5h10"/></svg>
<div style="left:982px;top:217px;width:211px;height:26px;border-radius:4px;background:#fff;box-shadow:0 1px 3px rgba(0,0,0,.04)"></div>
<div class="t" style="left:992px;top:223px;font-size:10.4px;line-height:13px;color:#2a2a2e;letter-spacing:.1px">User Journey Map</div>
<svg style="left:1175px;top:226px" width="9" height="7" viewBox="0 0 9 7" fill="none" stroke="#333" stroke-width="1.3" stroke-linecap="round" stroke-linejoin="round"><path d="M1.5 2l3 3 3-3"/></svg>
<svg style="left:1202px;top:223px" width="13" height="13" viewBox="0 0 13 13" fill="none" stroke="#222" stroke-width="1.4"><path d="M1.5 6.5h10"/></svg>
<div class="t" style="left:981px;top:250px;font-size:8.6px;line-height:10px;color:#8a8a8e;letter-spacing:.1px">Preview</div>
<div style="left:981px;top:265px;width:235px;height:147px;border-radius:4px;background:#fafafa"></div>
<div class="t" style="left:992px;top:273px;font-size:15px;font-weight:700;line-height:20px;color:#1d1d21;letter-spacing:0;word-spacing:0">User&nbsp; Journey Map</div>
<div style="left:993px;top:298px;width:211px;height:105px;border-radius:6px;background:#f4f4f5"></div>
<!-- left col -->
<div style="left:1005px;top:306px;width:35px;height:18px;border-radius:2px;background:#dcddf6"></div>
<div style="left:1005px;top:330px;width:35px;height:18px;border-radius:2px;background:#e6e6f3"></div>
<div style="left:1005px;top:354px;width:35px;height:18px;border-radius:2px;background:#e6e6f3"></div>
<div style="left:1005px;top:377px;width:35px;height:18px;border-radius:2px;background:#e6e6f3"></div>
<div style="left:1010px;top:314px;width:25px;height:1.5px;background:#85858f"></div>
<div style="left:1010px;top:338px;width:25px;height:1.5px;background:#85858f"></div>
<div style="left:1010px;top:362px;width:25px;height:1.5px;background:#85858f"></div>
<div style="left:1010px;top:385px;width:25px;height:1.5px;background:#85858f"></div>
<div style="left:1053px;top:306px;width:1px;height:89px;background:#9a9a9e"></div>
<div style="left:1049.5px;top:337px;width:7px;height:24px;border-radius:3.5px;background:#fff;border:1px solid #8a8a8e"></div>
<!-- header cells -->
<div style="left:1066px;top:306px;width:37px;height:18px;border-radius:3px;background:#dcddf8"></div>
<div style="left:1110px;top:306px;width:37px;height:18px;border-radius:3px;background:#dcddf8"></div>
<div style="left:1154px;top:306px;width:37px;height:18px;border-radius:3px;background:#dcddf8"></div>
<div style="left:1071px;top:314px;width:27px;height:1.5px;background:#fff"></div>
<div style="left:1115px;top:314px;width:27px;height:1.5px;background:#fff"></div>
<div style="left:1159px;top:314px;width:27px;height:1.5px;background:#fff"></div>
<!-- body cells -->
<div style="left:1066px;top:330px;width:37px;height:18px;border-radius:3px;background:#fff;border:1px solid #b4b4b8"></div>
<div style="left:1066px;top:354px;width:37px;height:18px;border-radius:3px;background:#fff;border:1px solid #b4b4b8"></div>
<div style="left:1066px;top:377px;width:37px;height:18px;border-radius:3px;background:#fff;border:1px solid #b4b4b8"></div>
<div style="left:1110px;top:330px;width:37px;height:18px;border-radius:3px;background:#fdfdfd"></div>
<div style="left:1110px;top:354px;width:37px;height:18px;border-radius:3px;background:#fdfdfd"></div>
<div style="left:1110px;top:377px;width:37px;height:18px;border-radius:3px;background:#fdfdfd"></div>
<div style="left:1154px;top:330px;width:37px;height:18px;border-radius:3px;background:#fdfdfd"></div>
<div style="left:1154px;top:354px;width:37px;height:18px;border-radius:3px;background:#fdfdfd"></div>
<div style="left:1154px;top:377px;width:37px;height:18px;border-radius:3px;background:#fdfdfd"></div>
<!-- export button -->
<div style="left:982px;top:794px;width:233px;height:27px;border-radius:4px;background:#fff;box-shadow:0 1px 3px rgba(0,0,0,.06)"></div>
<div class="t" style="left:982px;top:800px;width:233px;text-align:center;font-size:11.6px;line-height:15px;color:#2a2a2e;letter-spacing:.1px">Export</div>

</div>
</div>
</body>
</html>
